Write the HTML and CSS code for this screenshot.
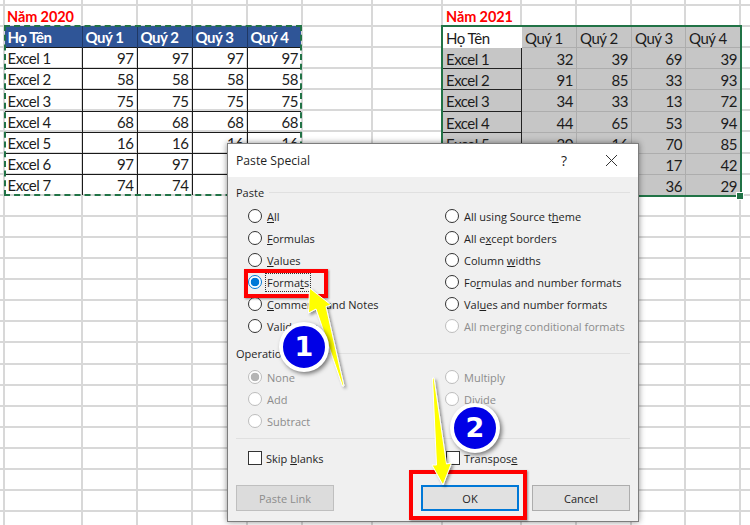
FILE: index.html
```html
<!DOCTYPE html>
<html lang="vi">
<head>
<meta charset="utf-8">
<title>Paste Special</title>
<link rel="stylesheet" href="styles.css">
</head>
<body>
<main class="sheet">
  <section class="block block-source">
    <h2 class="year">Năm 2020</h2>
    <table class="data source">
      <thead><tr><th>Họ Tên</th><th>Quý 1</th><th>Quý 2</th><th>Quý 3</th><th>Quý 4</th></tr></thead>
      <tbody>
        <tr><td>Excel 1</td><td>97</td><td>97</td><td>97</td><td>97</td></tr>
        <tr><td>Excel 2</td><td>58</td><td>58</td><td>58</td><td>58</td></tr>
        <tr><td>Excel 3</td><td>75</td><td>75</td><td>75</td><td>75</td></tr>
        <tr><td>Excel 4</td><td>68</td><td>68</td><td>68</td><td>68</td></tr>
        <tr><td>Excel 5</td><td>16</td><td>16</td><td>16</td><td>16</td></tr>
        <tr><td>Excel 6</td><td>97</td><td>97</td><td>97</td><td>97</td></tr>
        <tr><td>Excel 7</td><td>74</td><td>74</td><td>74</td><td>74</td></tr>
      </tbody>
    </table>
  </section>
  <section class="block block-target">
    <h2 class="year">Năm 2021</h2>
    <table class="data target">
      <thead><tr><th>Họ Tên</th><th>Quý 1</th><th>Quý 2</th><th>Quý 3</th><th>Quý 4</th></tr></thead>
      <tbody>
        <tr><td>Excel 1</td><td>32</td><td>39</td><td>69</td><td>39</td></tr>
        <tr><td>Excel 2</td><td>91</td><td>85</td><td>33</td><td>93</td></tr>
        <tr><td>Excel 3</td><td>34</td><td>33</td><td>13</td><td>72</td></tr>
        <tr><td>Excel 4</td><td>44</td><td>65</td><td>53</td><td>94</td></tr>
        <tr><td>Excel 5</td><td>20</td><td>16</td><td>70</td><td>85</td></tr>
        <tr><td>Excel 6</td><td>64</td><td>22</td><td>17</td><td>42</td></tr>
        <tr><td>Excel 7</td><td>51</td><td>48</td><td>36</td><td>29</td></tr>
      </tbody>
    </table>
    <span class="handle"></span>
  </section>
</main>

<div class="dialog">
  <header class="titlebar">
    <span class="title">Paste Special</span>
    <span class="help">?</span>
    <svg class="close" width="13" height="13" viewBox="0 0 13 13"><path d="M1 1 12 12M12 1 1 12" fill="none" stroke="#333" stroke-width="1"/></svg>
  </header>
  <div class="body">
    <div class="group-label"><span>Paste</span></div>
    <div class="options">
      <div class="col">
        <label class="opt"><i class="radio"></i><span><u>A</u>ll</span></label>
        <label class="opt"><i class="radio"></i><span><u>F</u>ormulas</span></label>
        <label class="opt"><i class="radio"></i><span><u>V</u>alues</span></label>
        <label class="opt"><i class="radio on"></i><span class="focus">Forma<u>t</u>s</span></label>
        <label class="opt"><i class="radio"></i><span><u>C</u>omments and Notes</span></label>
        <label class="opt"><i class="radio"></i><span>Validatio<u>n</u></span></label>
      </div>
      <div class="col">
        <label class="opt"><i class="radio"></i><span>All using Source t<u>h</u>eme</span></label>
        <label class="opt"><i class="radio"></i><span>All e<u>x</u>cept borders</span></label>
        <label class="opt"><i class="radio"></i><span>Column <u>w</u>idths</span></label>
        <label class="opt"><i class="radio"></i><span>Fo<u>r</u>mulas and number formats</span></label>
        <label class="opt"><i class="radio"></i><span>Val<u>u</u>es and number formats</span></label>
        <label class="opt off"><i class="radio"></i><span>All merging conditional formats</span></label>
      </div>
    </div>
    <div class="group-label op"><span>Operation</span></div>
    <div class="options ops">
      <div class="col">
        <label class="opt off"><i class="radio dot"></i><span>None</span></label>
        <label class="opt off"><i class="radio"></i><span>Add</span></label>
        <label class="opt off"><i class="radio"></i><span>Subtract</span></label>
      </div>
      <div class="col">
        <label class="opt off"><i class="radio"></i><span>Multiply</span></label>
        <label class="opt off"><i class="radio"></i><span>Divide</span></label>
      </div>
    </div>
    <hr class="rule">
    <div class="checks">
      <label class="chk"><i class="box"></i><span>Skip <u>b</u>lanks</span></label>
      <label class="chk"><i class="box"></i><span>Transpos<u>e</u></span></label>
    </div>
    <div class="buttons">
      <button class="btn" disabled>Paste Link</button>
      <span class="right-btns">
        <button class="btn primary">OK</button>
        <button class="btn">Cancel</button>
      </span>
    </div>
  </div>
</div>

<span class="mark mark-formats"></span>
<span class="mark mark-ok"></span>

<svg class="arrows" width="750" height="525" viewBox="0 0 750 525">
  <defs>
    <filter id="sh" x="-30%" y="-30%" width="160%" height="160%"><feDropShadow dx="2" dy="2" stdDeviation="1.5" flood-color="#000" flood-opacity=".4"/></filter>
  </defs>
  <path class="arrow" filter="url(#sh)" d="M309.500 288 331 305 326 306.500 344 386 342.500 386 316 309 308.500 313Z"/>
  <path class="arrow" filter="url(#sh)" d="M443 485 432 465 436.500 465 432.500 378 434 378 446.500 464 451.500 463Z"/>
</svg>

<span class="badge badge-one">1</span>
<span class="badge badge-two">2</span>
</body>
</html>
```

FILE: styles.css
```css
* { box-sizing: border-box; }
html, body { margin: 0; padding: 0; }
body {
  width: 750px;
  height: 525px;
  overflow: hidden;
  position: relative;
  background-color: #fff;
  font-family: Lato, "Liberation Sans", sans-serif;
  /* worksheet gridlines */
  background-image:
    linear-gradient(#d8d8d8, #d8d8d8), linear-gradient(#d8d8d8, #d8d8d8),
    linear-gradient(#d8d8d8, #d8d8d8), linear-gradient(#d8d8d8, #d8d8d8),
    linear-gradient(#d8d8d8, #d8d8d8), linear-gradient(#d8d8d8, #d8d8d8),
    linear-gradient(#d8d8d8, #d8d8d8), linear-gradient(#d8d8d8, #d8d8d8),
    linear-gradient(#d8d8d8, #d8d8d8), linear-gradient(#d8d8d8, #d8d8d8),
    linear-gradient(#d8d8d8, #d8d8d8), linear-gradient(#d8d8d8, #d8d8d8),
    linear-gradient(#d8d8d8, #d8d8d8),
    repeating-linear-gradient(#d8d8d8 0, #d8d8d8 2px, #fff 2px, #fff 21.1px);
  background-repeat: no-repeat;
  background-size: 2px 100%, 2px 100%, 2px 100%, 2px 100%, 2px 100%, 2px 100%, 2px 100%, 2px 100%, 2px 100%, 2px 100%, 2px 100%, 2px 100%, 2px 100%, 100% 600px;
  background-position: 3px 0, 81px 0, 136px 0, 191px 0, 246px 0, 301px 0, 371px 0, 441px 0, 520px 0, 575px 0, 630px 0, 684px 0, 739px 0, 0 -17.3px;
}

/* ---------- worksheet ---------- */
.sheet {
  display: flex;
  gap: 141px;
  padding: 5px 0 0 5px;
}
.block { position: relative; flex: none; }
.block-source { width: 296px; }
.block-target { width: 298px; }
.year {
  margin: 0;
  height: 21px;
  padding-left: 2px;
  font-size: 14.500px;
  letter-spacing: -.1px;
  line-height: 23px;
  font-weight: 700;
  color: #f00;
}
.block-target .year { padding-left: 4px; }
.data {
  border-collapse: collapse;
  table-layout: fixed;
  font-size: 15px;
  letter-spacing: -.5px;
  color: #1c1c1c;
}
.data th, .data td {
  height: 21px;
  padding: 1px 3px 0;
  white-space: nowrap;
  overflow: hidden;
  font-weight: 400;
  line-height: 18px;
}
.data tbody tr:nth-child(3) td { height: 22px; }
.data td { text-align: right; }
.data th, .data td:first-child { text-align: left; }
.source th:first-child, .source td:first-child { padding-left: 2.500px; }

.source { width: 296px; outline: 2px dashed #217346; outline-offset: -1px; }
.source th { width: 55px; background: #2f5597; color: #fff; font-weight: 700; border-right: 1px solid #1f3864; }
.source th:first-child { width: 77px; }
.source th:last-child { width: 54px; border-right: 0; }
.source td { border: 1px solid #1a1a1a; }
.source td:first-child { border-left: 0; }
.source td:last-child { border-right: 0; }
.source tr:last-child td { border-bottom: 0; }

.target { width: 298px; outline: 2px solid #217346; outline-offset: -1px; background: #c6c6c6; }
.target th { width: 55px; text-align: left; }
.target th:first-child { width: 79px; background: #fff; }
.target th:nth-child(4) { width: 54px; }
.target th, .target td { border: 1px solid #adadad; }
.target td:first-child { border-bottom: 1px solid #222; border-right: 1px solid #222; }
.target th:first-child { border-color: #fff; }
.handle {
  position: absolute;
  right: -3px;
  bottom: -3px;
  width: 6px;
  height: 6px;
  background: #217346;
  outline: 1px solid #fff;
}

/* ---------- dialog ---------- */
.dialog {
  position: absolute;
  left: 227px;
  top: 143px;
  width: 412px;
  height: 379px;
  display: flex;
  flex-direction: column;
  border: 1px solid #7d7d7d;
  background: #f0f0f0;
  box-shadow: 0 0 6px rgba(0, 0, 0, .45);
  font-family: "Open Sans", "Noto Sans", sans-serif;
  font-size: 11px;
  color: #1f1f1f;
}
.titlebar {
  flex: none;
  height: 33px;
  display: flex;
  align-items: center;
  padding: 0 20px 0 8px;
  background: #fff;
}
.title { flex: 1; font-size: 12.200px; }
.help { font-size: 14px; margin-right: 38px; }
.close { display: block; }
.body {
  flex: 1;
  display: flex;
  flex-direction: column;
  padding: 7px 8px 8px;
}
.group-label {
  display: flex;
  align-items: center;
  gap: 5px;
  height: 16px;
}
.group-label::after { content: ""; flex: 1; height: 1px; background: #e0e0e0; }
.group-label.op { margin-top: 8px; }
.options { display: flex; margin-top: 5px; }
.ops { margin-top: 5px; }
.col { width: 198px; display: flex; flex-direction: column; padding-left: 12px; }
.opt {
  display: flex;
  align-items: center;
  gap: 5px;
  height: 22px;
  white-space: nowrap;
}
.radio {
  flex: none;
  width: 14px;
  height: 14px;
  border-radius: 50%;
  border: 1px solid #333;
  background: #fff;
}
.radio.on {
  border-color: #0078d7;
  background: radial-gradient(circle, #0078d7 0 4px, #fff 4.600px);
}
.off { color: #8c8c8c; }
.off .radio { border-color: #bdbdbd; }
.radio.dot { background: radial-gradient(circle, #b5b5b5 0 4px, #fff 4.600px); }
.focus { outline: 1px dotted #333; outline-offset: 1px; }
u { text-underline-offset: 1px; }
.rule {
  margin: 6px 0 0;
  width: 100%;
  border: 0;
  height: 1px;
  background: #e0e0e0;
}
.checks { display: flex; margin-top: 12px; padding-left: 12px; }
.chk { flex: none; display: flex; align-items: center; gap: 4px; width: 198px; height: 14px; }
.box { flex: none; width: 14px; height: 14px; border: 1px solid #333; background: #fff; }
.buttons {
  display: flex;
  justify-content: space-between;
  margin-top: 20px;
}
.right-btns { display: flex; gap: 13px; }
.btn {
  width: 98px;
  height: 26px;
  padding: 0;
  border: 1px solid #adadad;
  background: #e1e1e1;
  font: inherit;
  color: #1f1f1f;
}
.btn[disabled] { color: #8c8c8c; background: #dcdcdc; border-color: #bfbfbf; }
.primary { border: 2px solid #0078d7; }

/* ---------- annotations ---------- */
.mark {
  position: absolute;
  border: 4px solid #f00;
  box-shadow: 1px 1px 2px rgba(0, 0, 0, .4);
}
.mark-formats { left: 244px; top: 269px; width: 84px; height: 29px; }
.mark-ok { left: 409px; top: 470px; width: 118px; height: 50px; }
.arrows { position: absolute; left: 0; top: 0; }
.arrow { fill: #ffff00; stroke: #fff; stroke-width: 1px; stroke-linejoin: round; }
.badge {
  position: absolute;
  width: 50px;
  height: 50px;
  border-radius: 50%;
  border: 4px solid #fff;
  background: #0000e6;
  box-shadow: 2px 2px 4px rgba(0, 0, 0, .5);
  color: #fff;
  font-family: "DejaVu Sans", sans-serif;
  font-weight: 700;
  font-size: 27px;
  line-height: 42px;
  text-align: center;
}
.badge-one { left: 279px; top: 322px; }
.badge-two { left: 450px; top: 403px; }
```
